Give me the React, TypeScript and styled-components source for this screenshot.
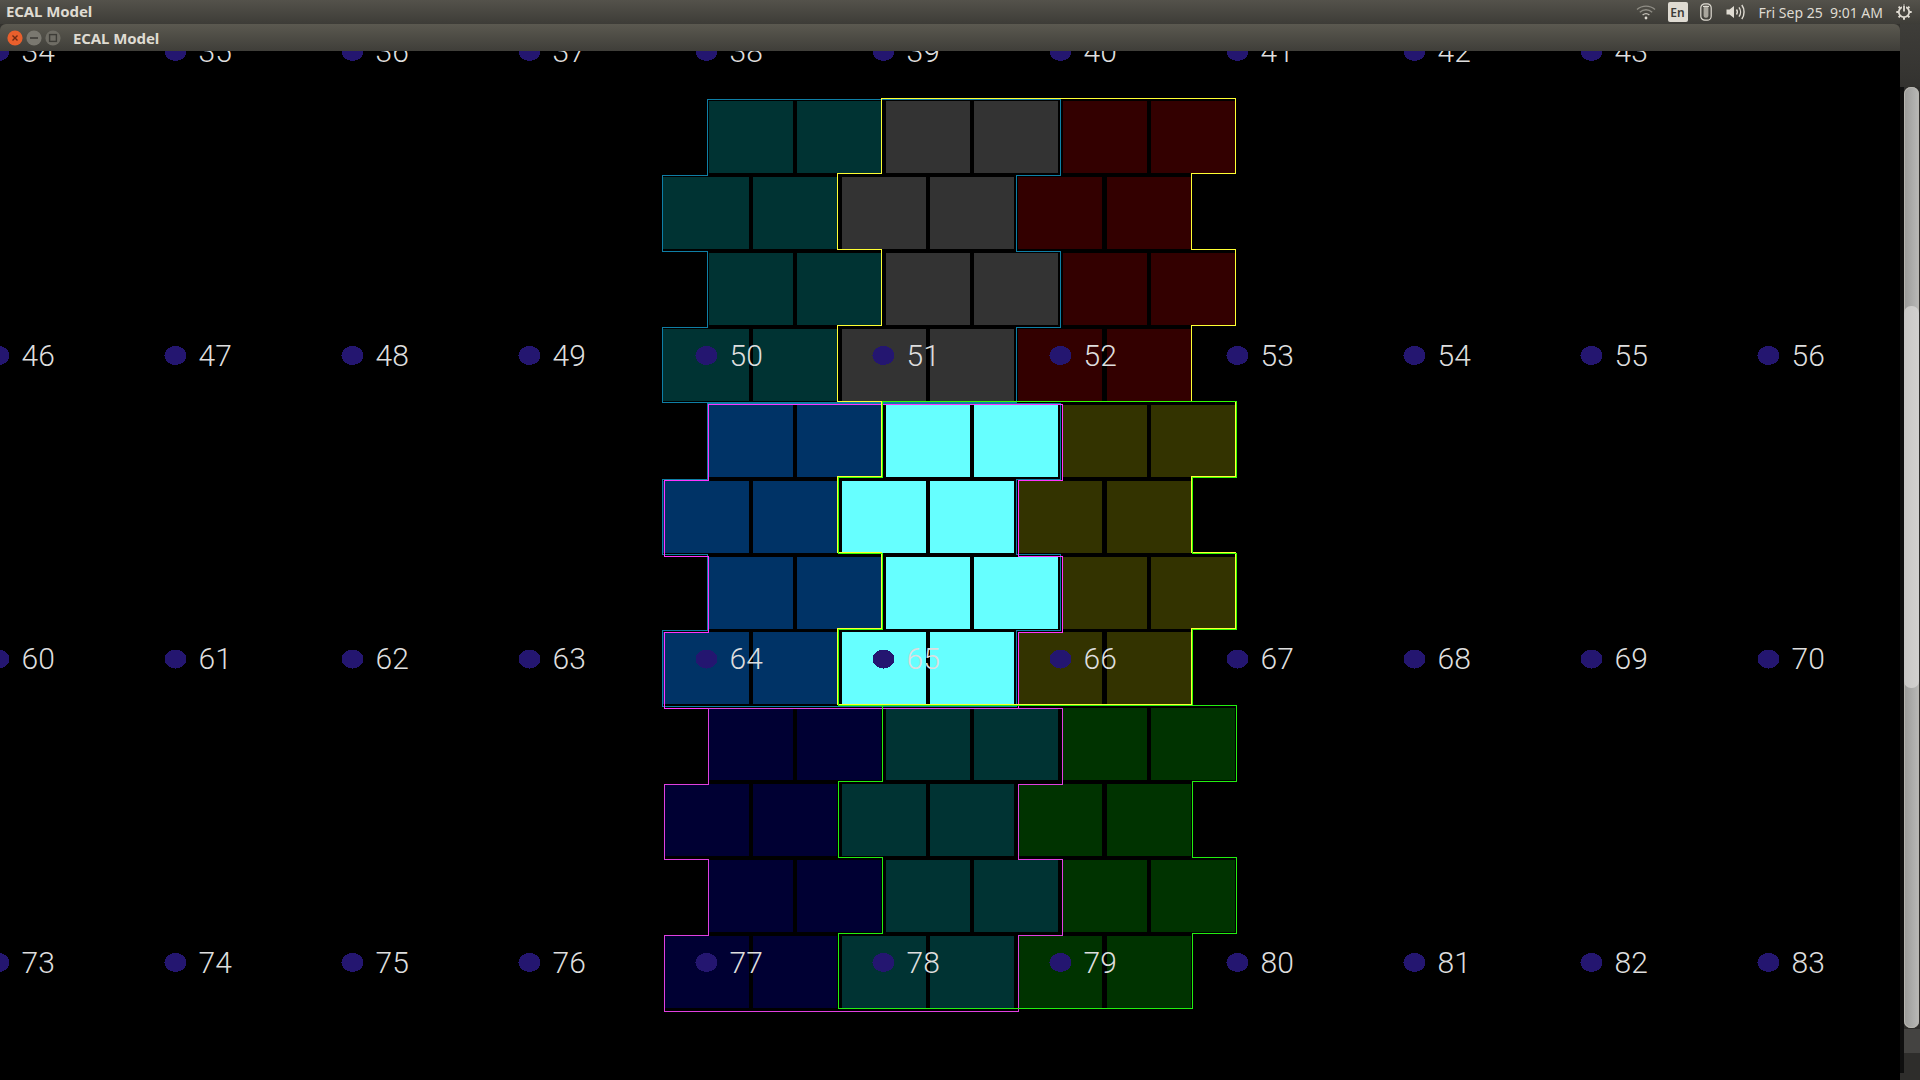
import React from "react";
import styled, { createGlobalStyle } from "styled-components";

const Global = createGlobalStyle`
  html, body { margin: 0; padding: 0; background: #000; overflow: hidden; }
  #root { width: 1920px; height: 1080px; }
`;

const Screen = styled.div`
  width: 1920px;
  height: 1080px;
  display: flex;
  flex-direction: column;
  overflow: hidden;
  background: #000;
`;

const Panel = styled.header`
  height: 24px;
  flex: none;
  display: flex;
  align-items: center;
  padding: 0 8px 2px 6px;
  box-sizing: border-box;
  background: linear-gradient(#54524b, #3d3c37);
`;

const Caption = styled.span`
  font: 700 15px "Noto Sans", sans-serif;
  color: #dfdbd2;
  letter-spacing: -0.1px;
`;

const Tray = styled.div`
  margin-left: auto;
  display: flex;
  align-items: center;
  height: 24px;
  margin-top: 2px;
`;

const TrayIcon = styled.svg<{ $gap: number }>`
  display: block;
  flex: none;
  margin-right: ${(p) => p.$gap}px;
`;

const LangBadge = styled.span`
  width: 20px;
  height: 20px;
  margin-right: 12px;
  border-radius: 2px;
  background: #dfdbd2;
  color: #3c3b37;
  display: flex;
  align-items: center;
  justify-content: center;
  font: 600 12px "Noto Sans", sans-serif;
`;

const Clock = styled.span`
  font: 400 14px "Noto Sans", sans-serif;
  color: #dfdbd2;
  margin-right: 13px;
  padding-left: 1px;
  white-space: pre;
`;

const Desktop = styled.div`
  flex: 1;
  display: flex;
  min-height: 0;
`;

const Window = styled.main`
  width: 1900px;
  flex: none;
  display: flex;
  flex-direction: column;
  background: #33322e;
`;

const TitleBar = styled.div`
  height: 27px;
  flex: none;
  display: flex;
  align-items: center;
  padding-left: 7px;
  border-radius: 6px 6px 0 0;
  background: linear-gradient(#5b5950, #3f3e39);
`;

const WinButtons = styled.svg`
  display: block;
  flex: none;
  margin-right: 6px;
`;

const Canvas = styled.svg`
  display: block;
  flex: 1;
  width: 1900px;
  height: 1029px;
  background: #000;
`;

const Cell = styled.rect<{ $fill: string }>`
  fill: ${(p) => p.$fill};
  shape-rendering: crispEdges;
`;

const Outline = styled.polygon<{ $stroke: string }>`
  fill: none;
  stroke: ${(p) => p.$stroke};
  stroke-width: 1;
  shape-rendering: crispEdges;
`;

const Dot = styled.ellipse`
  fill: #241670;
  shape-rendering: crispEdges;
`;

const Label = styled.text`
  font: 300 30px Roboto, "Liberation Sans", sans-serif;
  fill: #dedede;
`;

const Side = styled.aside`
  flex: 1;
  display: flex;
  flex-direction: column;
  background: #2e2d2b;
`;

const SideCap = styled.div`
  height: 63px;
  flex: none;
  background: linear-gradient(#3e3d39, #33322f);
`;

const SideBody = styled.div`
  flex: 1;
  display: flex;
`;

const Gutter = styled.div`
  width: 4px;
  height: 986px;
  background: #0e0e0e;
`;

const ScrollColumn = styled.div`
  flex: 1;
  display: flex;
  flex-direction: column;
`;

const Trough = styled.div`
  height: 941px;
  margin-right: 1px;
  flex: none;
  border-radius: 7px;
  background: linear-gradient(90deg, #9a9a98, #b9b9b7);
  box-shadow: inset 0 0 0 1px #b8b6b0;
`;

const Thumb = styled.div`
  height: 382px;
  margin-top: 219px;
  border-radius: 7px;
  background: linear-gradient(90deg, #c8c7c5, #d2d1cf);
`;

const ScrollButton = styled.div`
  height: 24px;
  flex: none;
  margin-top: 1px;
  background: #444341;
`;

const tops = [101, 177, 253, 329, 405, 481, 557, 632, 708, 784, 860, 936];
const oddX = [709, 797, 886, 974, 1063, 1151];
const evenX = [665, 753, 842, 930, 1018, 1107];
const palettes = [
  ["#003333", "#333333", "#330000"],
  ["#003366", "#66ffff", "#333300"],
  ["#000033", "#003333", "#003300"],
];

const cells = tops.flatMap((y, r) => {
  const block = Math.floor(r / 4);
  const even = r % 2 === 1;
  const xs = even ? evenX : oddX;
  return xs.map((x, c) => {
    const stretch = even && c === 0 && block < 2;
    return {
      key: `${r}-${c}`,
      x: stretch ? 663 : x,
      y,
      w: stretch ? 86 : 84,
      fill: palettes[block][Math.floor(c / 2)],
    };
  });
});

const comb = (L: number, R: number, top: number, ys: number[], leftStep = 44) => {
  const [a, b, c, d] = ys;
  const far = L - leftStep;
  const pts = [
    [L, top], [R, top], [R, a], [R - 44, a], [R - 44, b], [R, b], [R, c], [R - 44, c],
    [R - 44, d], [far, d], [far, c], [L, c], [L, b], [far, b], [far, a], [L, a],
  ];
  return pts.map(([x, y]) => `${x + 0.5},${y + 0.5}`).join(" ");
};

const outlines = [
  { id: "a", color: "#0f7fa6", pts: comb(707, 1060, 99, [175, 251, 327, 402], 45) },
  { id: "b", color: "#ffff33", pts: comb(881, 1235, 98, [173, 249, 325, 401]) },
  { id: "c", color: "#0f7fa6", pts: comb(707, 1060, 403, [479, 554, 630, 706], 45) },
  { id: "d", color: "#ff33ff", pts: comb(708, 1062, 404, [480, 556, 632, 708]) },
  { id: "e", color: "#ffff33", pts: comb(881, 1235, 401, [476, 552, 628, 704]) },
  { id: "f", color: "#33ff00", pts: comb(882, 1236, 401, [477, 553, 629, 705]) },
  { id: "g", color: "#e040e0", pts: comb(708, 1062, 708, [784, 859, 935, 1011]) },
  { id: "h", color: "#22ee11", pts: comb(882, 1236, 705, [781, 857, 933, 1008]) },
];

const rows = [
  { cy: 51.5, start: 34, count: 10 },
  { cy: 355.5, start: 46, count: 11 },
  { cy: 659, start: 60, count: 11 },
  { cy: 962.5, start: 73, count: 11 },
];

const WifiIcon = () => (
  <TrayIcon $gap={12} width="20" height="16" viewBox="0 0 20 16" fill="none" stroke="#8f8d85" strokeWidth="1.4">
    <path d="M1 5.5C6 1 14 1 19 5.5" />
    <path d="M3.8 8.2C7.5 5 12.5 5 16.2 8.2" />
    <path d="M6.6 11C8.6 9.4 11.4 9.4 13.4 11" stroke="#c4c1b8" />
    <circle cx="10" cy="14" r="1.4" fill="#dfdbd2" stroke="none" />
  </TrayIcon>
);

const MouseIcon = () => (
  <TrayIcon $gap={14} width="12" height="18" viewBox="0 0 12 18" fill="none" stroke="#dfdbd2" strokeWidth="1.2">
    <rect x="0.8" y="0.8" width="10.4" height="16.4" rx="4" />
    <rect x="3.6" y="2.8" width="4.8" height="12" rx="2" fill="#a9a69d" stroke="none" />
    <path d="M3 3.4H9" />
  </TrayIcon>
);

const VolumeIcon = () => (
  <TrayIcon $gap={12} width="20" height="18" viewBox="0 0 20 18" fill="none" stroke="#dfdbd2" strokeWidth="1.4">
    <path d="M0.5 6.5H3.5L8 3V15L3.5 11.5H0.5Z" fill="#dfdbd2" stroke="none" />
    <path d="M10.5 6.5C11.6 8 11.6 10 10.5 11.5" />
    <path d="M13 4.3C15 7 15 11 13 13.7" />
    <path d="M15.8 2C18.8 6 18.8 12 15.8 16" />
  </TrayIcon>
);

const PowerIcon = () => (
  <TrayIcon $gap={0} width="16" height="16" viewBox="0 0 16 16" fill="none" stroke="#dfdbd2">
    <circle cx="8" cy="8" r="5.2" strokeWidth="1.8" />
    <path
      d="M8 0.3V2.6M8 13.4V15.7M0.3 8H2.6M13.4 8H15.7M2.6 2.6L4.2 4.2M11.8 11.8L13.4 13.4M2.6 13.4L4.2 11.8"
      strokeWidth="2"
    />
    <path d="M13.4 2.6L11.8 4.2" strokeWidth="2" />
    <path d="M8 0.5V8" stroke="#45443f" strokeWidth="4" />
    <path d="M8 1.5V7.5" strokeWidth="1.8" />
  </TrayIcon>
);

export default function App() {
  return (
    <Screen>
      <Global />
      <Panel>
        <Caption>ECAL Model</Caption>
        <Tray>
          <WifiIcon />
          <LangBadge>En</LangBadge>
          <MouseIcon />
          <VolumeIcon />
          <Clock>Fri Sep 25  9:01 AM</Clock>
          <PowerIcon />
        </Tray>
      </Panel>
      <Desktop>
        <Window>
          <TitleBar>
            <WinButtons width="60" height="20" viewBox="0 0 60 20">
              <circle cx="8" cy="10" r="7.6" fill="#e95f2c" />
              <path d="M5.5 7.5L10.5 12.5M10.5 7.5L5.5 12.5" stroke="#6e2a12" strokeWidth="1.4" fill="none" />
              <circle cx="27" cy="10" r="7.6" fill="#7a7870" />
              <path d="M23 10H31" stroke="#3d3c37" strokeWidth="1.6" fill="none" />
              <circle cx="46" cy="10" r="7.6" fill="#6f6d65" />
              <rect x="42.6" y="6.6" width="6.8" height="6.8" stroke="#3d3c37" strokeWidth="1.4" fill="none" />
            </WinButtons>
            <Caption>ECAL Model</Caption>
          </TitleBar>
          <Canvas viewBox="0 51 1900 1029">
            {cells.map((c) => (
              <Cell key={c.key} x={c.x} y={c.y} width={c.w} height={72} $fill={c.fill} />
            ))}
            {outlines.map((o) => (
              <Outline key={o.id} points={o.pts} $stroke={o.color} />
            ))}
            {rows.flatMap((row) =>
              Array.from({ length: row.count }, (_, i) => {
                const x = -1.5 + 177 * i;
                return (
                  <g key={`${row.start}-${i}`}>
                    <Dot cx={x} cy={row.cy} rx={11} ry={9.5} />
                    <Label x={x + 23} y={row.cy + 10}>
                      {row.start + i}
                    </Label>
                  </g>
                );
              })
            )}
          </Canvas>
        </Window>
        <Side>
          <SideCap />
          <SideBody>
            <Gutter />
            <ScrollColumn>
              <Trough>
                <Thumb />
              </Trough>
              <ScrollButton />
            </ScrollColumn>
          </SideBody>
        </Side>
      </Desktop>
    </Screen>
  );
}
